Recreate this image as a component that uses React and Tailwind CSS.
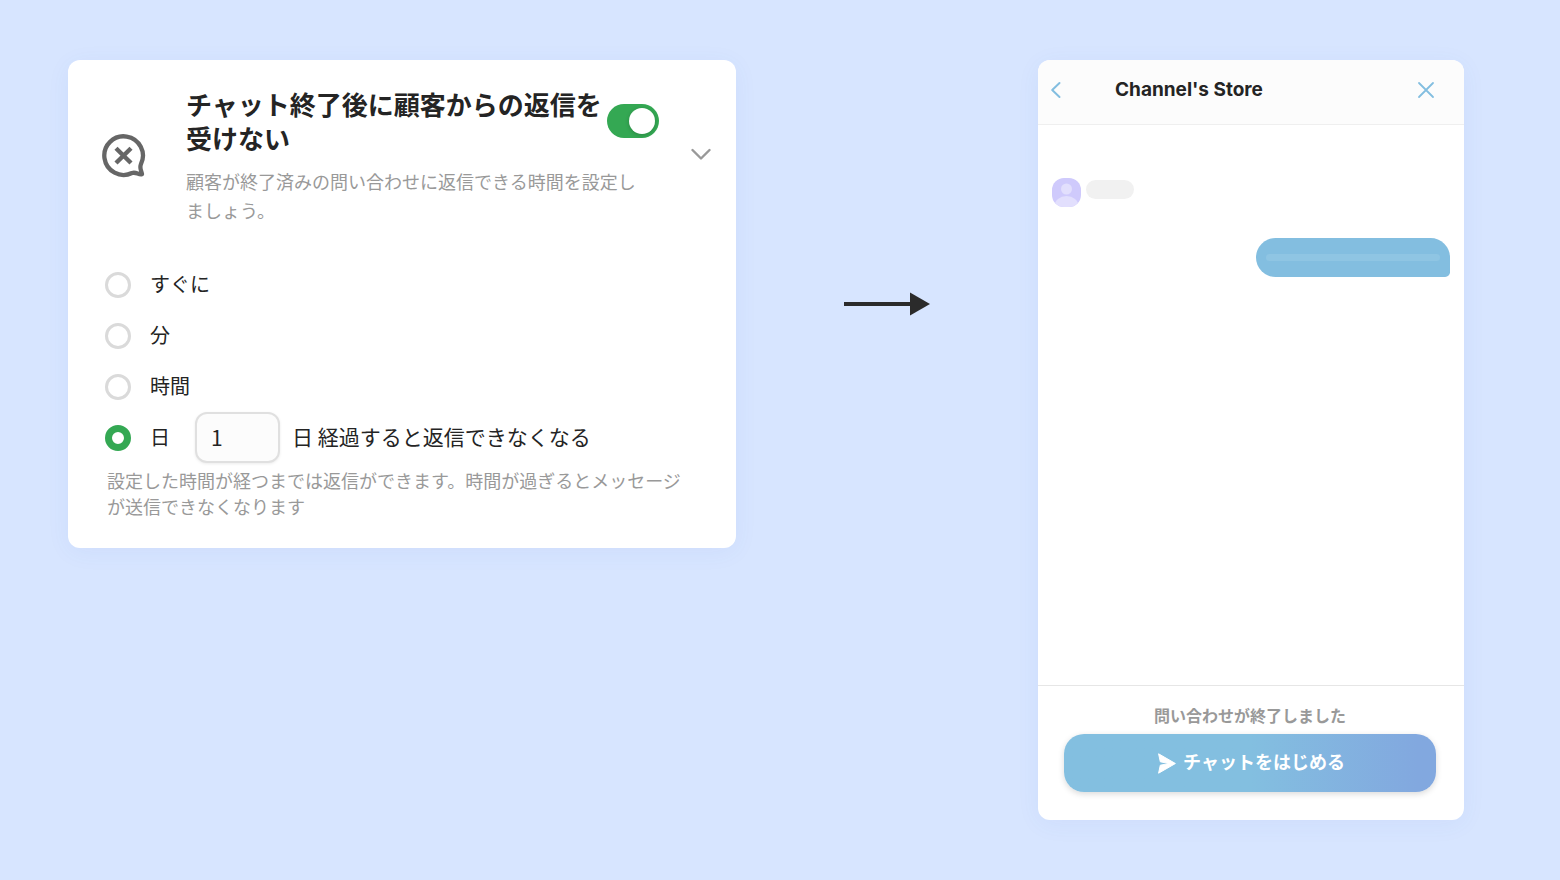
import React, { useState } from 'react';

const UNITS = [
  { value: 'now', label: 'すぐに' },
  { value: 'minute', label: '分' },
  { value: 'hour', label: '時間' },
  { value: 'day', label: '日' },
];

const ChatCloseIcon = () => (
  <svg className="w-11 h-11 shrink-0 text-[#666666]" viewBox="0 0 44 44" fill="none" stroke="currentColor" aria-hidden="true">
    <path
      d="M40 40.2C36.4 41.2 34.4 37.6 30 39A19.3 19.3 0 1 1 38.9 30.2C37.2 34.4 39.6 37 40 40.2Z"
      strokeWidth="4.3"
      strokeLinejoin="round"
    />
    <path d="M14 14.2L29 29M29 14.2L14 29" strokeWidth="4.4" />
  </svg>
);

const SettingsCard = () => {
  const [enabled, setEnabled] = useState(true);
  const [unit, setUnit] = useState('day');
  const [amount, setAmount] = useState('1');

  return (
    <section className="self-start rounded-xl bg-white pt-[27px] pb-[29px] shadow-[0_4px_24px_rgba(60,100,200,0.06)]">
      <div className="flex items-center pl-[34px] pr-[25px]">
        <ChatCloseIcon />
        <div className="ml-10 mr-8 flex-1">
          <div className="flex items-center justify-between">
            <h2 id="block-reply" className="flex-1 text-[26px] leading-[34px] font-bold text-[#242424]">
              チャット終了後に顧客からの返信を受けない
            </h2>
            <input
              type="checkbox"
              role="switch"
              aria-labelledby="block-reply"
              checked={enabled}
              onChange={(e) => setEnabled(e.target.checked)}
              className="flex h-[34px] w-[52px] shrink-0 cursor-pointer appearance-none items-center rounded-full bg-gray-300 px-1 checked:justify-end checked:bg-[#34a853] before:size-[26px] before:rounded-full before:bg-white before:shadow-[0_1px_4px_rgba(0,0,0,0.2)]"
            />
          </div>
          <p className="mt-3 pr-3 text-[18px] leading-[29px] text-[#999999]">
            顧客が終了済みの問い合わせに返信できる時間を設定しましょう。
          </p>
        </div>
        <button type="button" aria-label="詳細" className="shrink-0 text-[#999999]">
          <svg className="h-[22px] w-5" viewBox="0 0 20 22" fill="none" stroke="currentColor" strokeWidth="2.4" strokeLinecap="round" strokeLinejoin="round">
            <path d="M1.5 5L10 13.5L18.5 5" />
          </svg>
        </button>
      </div>

      <div role="radiogroup" aria-labelledby="block-reply" className="mt-[34px] pl-[37px] text-[20px] text-[#242424]">
        {UNITS.map(({ value, label }) => (
          <div key={value} className="flex h-[51px] items-center">
            <label className="flex cursor-pointer items-center gap-[19px]">
              <input
                type="radio"
                name="unit"
                value={value}
                checked={unit === value}
                onChange={() => setUnit(value)}
                className="size-[26px] shrink-0 appearance-none rounded-full border-3 border-[#dadada] bg-white checked:border-7 checked:border-[#34a853]"
              />
              <span className="pb-[2px]">{label}</span>
            </label>
            {value === 'day' && (
              <>
                <input
                  type="text"
                  id="amount"
                  value={amount}
                  onChange={(e) => setAmount(e.target.value)}
                  className="ml-[25px] h-[51px] w-[85px] rounded-xl border-2 border-[#e0e0e0] bg-[#fcfcfc] px-[14px] pb-[2px] text-[21px] shadow-[0_1px_3px_rgba(0,0,0,0.08)]"
                />
                <label htmlFor="amount" className="ml-3 pb-[2px] text-[21px]">
                  日 経過すると返信できなくなる
                </label>
              </>
            )}
          </div>
        ))}
      </div>

      <p className="mt-1 pl-[39px] pr-10 text-[18px] leading-[26px] text-[#999999]">
        設定した時間が経つまでは返信ができます。時間が過ぎるとメッセージが送信できなくなります
      </p>
    </section>
  );
};

const Arrow = () => (
  <div className="flex justify-center pt-[232px]">
    <svg className="h-6 w-[86px]" viewBox="0 0 86 24" fill="#2b2b2b" aria-hidden="true">
      <path d="M0 10H67V14H0Z" />
      <path d="M66 0.5L86 12L66 23.5Z" />
    </svg>
  </div>
);

const Avatar = () => (
  <svg className="size-[29px] rounded-xl" viewBox="0 0 29 29" aria-hidden="true">
    <rect width="29" height="29" fill="#cfcafc" />
    <circle cx="14.5" cy="11" r="5.5" fill="#e2dffd" />
    <ellipse cx="14.5" cy="28" rx="12" ry="10" fill="#e2dffd" />
  </svg>
);

const ChatWindow = () => (
  <section className="flex flex-col overflow-hidden rounded-xl bg-white shadow-[0_4px_24px_rgba(60,100,200,0.06)]">
    <header className="flex h-[65px] items-center border-b border-[#efefef] bg-[#fcfcfc] pb-1 pl-3 pr-7 text-[#83bee0]">
      <button type="button" aria-label="戻る">
        <svg className="h-5 w-3" viewBox="0 0 12 20" fill="none" stroke="currentColor" strokeWidth="2" strokeLinecap="round" strokeLinejoin="round">
          <path d="M9.5 3L2.2 10L9.5 17" />
        </svg>
      </button>
      <h2 className="ml-[53px] flex-1 font-['Inter',sans-serif] text-[19px] font-bold text-[#242424]">Channel's Store</h2>
      <button type="button" aria-label="閉じる">
        <svg className="size-5" viewBox="0 0 20 20" fill="none" stroke="currentColor" strokeWidth="1.8" strokeLinecap="round">
          <path d="M3 3L17 17M17 3L3 17" />
        </svg>
      </button>
    </header>

    <div className="flex-1 px-[14px] pt-[53px]">
      <div className="flex items-start gap-[5px]">
        <Avatar />
        <div className="mt-[2px] h-[19px] w-12 rounded-full bg-[#f1f1f1]" />
      </div>
      <div className="mt-[31px] ml-auto w-[194px] rounded-[20px] rounded-br-[5px] bg-[#83bee0] px-[10px] py-4">
        <div className="h-[7px] rounded-full bg-[#8fc5e3]" />
      </div>
    </div>

    <footer className="border-t border-[#e6e6e6] pt-4 pb-7 pl-[26px] pr-7">
      <p className="text-center text-[16px] leading-[26px] font-bold text-[#999999]">問い合わせが終了しました</p>
      <button
        type="button"
        className="mt-[6px] flex h-[58px] w-full items-center justify-center gap-[7px] rounded-[20px] bg-linear-to-r from-[#83bfe0] from-50% to-[#82a8df] to-95% pl-[3px] text-[18px] font-bold text-white shadow-[0_2px_6px_rgba(0,0,0,0.15)]"
      >
        <svg className="h-[21px] w-[18px]" viewBox="0 0 18 21" fill="currentColor" stroke="currentColor" strokeLinejoin="round" aria-hidden="true">
          <path d="M0.6 0.8L17.4 10.5L0.6 20.2L2.3 12.2L11 10.5L2.3 8.8Z" />
        </svg>
        <span className="pb-[3px]">チャットをはじめる</span>
      </button>
    </footer>
  </section>
);

const App = () => (
  <main
    lang="ja"
    className="grid min-h-screen grid-cols-[668fr_302fr_426fr] bg-[#d7e5ff] py-15 pl-17 pr-24 font-['Noto_Sans_CJK_JP',sans-serif]"
  >
    <SettingsCard />
    <Arrow />
    <ChatWindow />
  </main>
);

export default App;
